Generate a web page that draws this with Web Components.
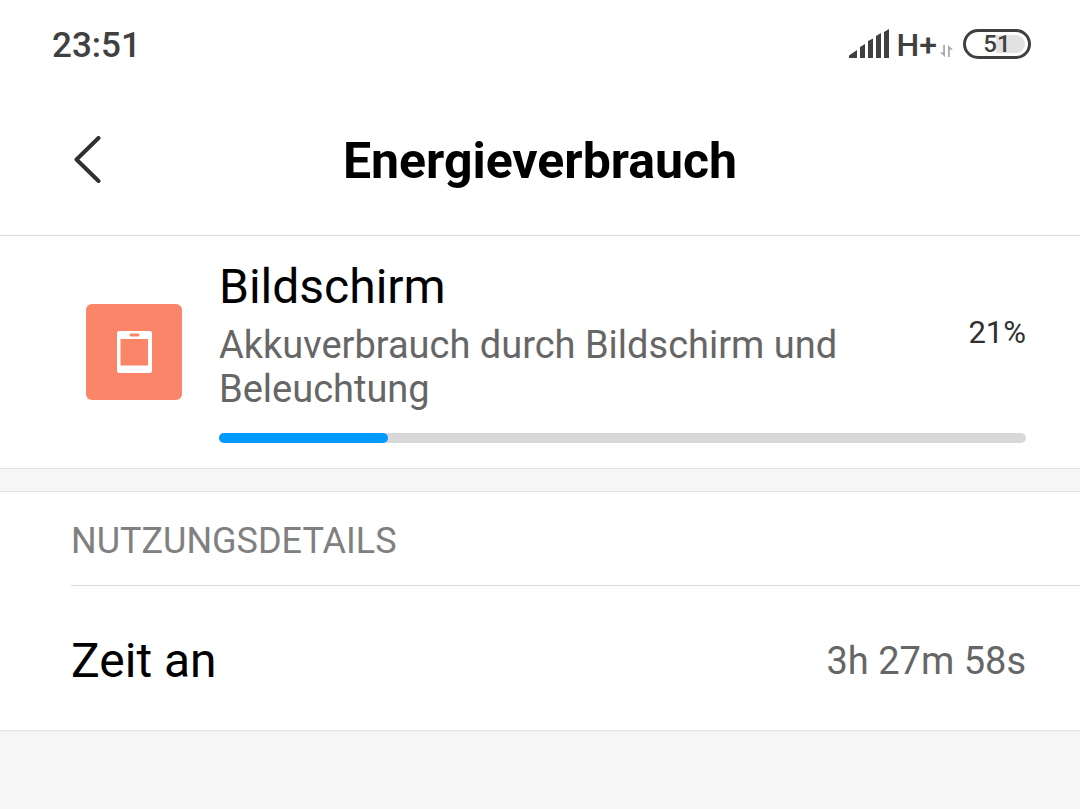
<!DOCTYPE html>
<html lang="de">
<head>
<meta charset="utf-8">
<meta name="viewport" content="width=device-width, initial-scale=1">
<title>Energieverbrauch</title>
<style>
  body {
    margin: 0;
    min-height: 100vh;
    background: #f6f6f6;
    color: #000;
    font-family: Roboto, "Noto Sans", sans-serif;
  }
</style>
</head>
<body>
<energy-page></energy-page>

<script>
const define = (name, html, setup) => {
  const template = document.createElement('template');
  template.innerHTML = html;
  customElements.define(name, class extends HTMLElement {
    constructor() {
      super();
      this.attachShadow({ mode: 'open' }).append(template.content.cloneNode(true));
    }
    connectedCallback() { if (setup) setup(this, this.shadowRoot); }
  });
};

define('signal-strength', `
  <style>:host { display: block; width: 40px; height: 30px; } svg { display: block; }</style>
  <svg width="40" height="30" viewBox="0 0 40 30" fill="#404040" role="img" aria-label="Signalstärke">
    <path d="M0 29V26.500L8 21V29ZM11 29V18L16 15V29ZM19 29V12L24 9.500V29ZM27 29V7L32 4V29ZM35 29V3L40 0V29Z"/>
  </svg>`);

define('data-arrows', `
  <style>:host { display: block; width: 13px; height: 12px; } svg { display: block; }</style>
  <svg width="13" height="12" viewBox="0 0 13 12" fill="#aaa" aria-hidden="true">
    <path d="M3.200 0H5V12L0 7.300H3.200ZM8 12V0L13 4.700H9.800V12Z"/>
  </svg>`);

define('battery-level', `
  <style>
    :host { display: block; }
    .shell {
      box-sizing: border-box; width: 68px; height: 30px; padding: 3px;
      border: 3px solid #404040; border-radius: 15px;
      color: #404040; font-size: 24px; font-weight: 500; line-height: 18px; text-align: center;
    }
    .fill { height: 18px; border-radius: 9px; background: linear-gradient(90deg, #fff 49%, #e2e2e2 49%); }
  </style>
  <div class="shell"><div class="fill"><slot></slot></div></div>`);

define('status-bar', `
  <style>
    :host {
      display: flex; justify-content: space-between; align-items: center;
      height: 88px; padding: 0 49px 0 52px; color: #404040;
    }
    time { padding-top: 4px; font-size: 35px; line-height: 40px; font-weight: 500; }
    .right { display: flex; align-items: center; }
    .net { margin-left: 8px; padding-top: 2px; font-size: 32px; line-height: 40px; font-weight: 500; }
    data-arrows { margin: 14px 10px 0 3px; }
  </style>
  <time>23:51</time>
  <div class="right">
    <signal-strength></signal-strength>
    <span class="net">H+</span>
    <data-arrows></data-arrows>
    <battery-level>51</battery-level>
  </div>`);

define('title-bar', `
  <style>
    :host {
      display: grid; grid-template-columns: 80px 1fr 80px; align-items: center;
      height: 143px; padding: 0 48px 4px; border-bottom: 1px solid #dadada;
    }
    button { width: 80px; height: 80px; padding: 0; border: 0; background: none; }
    svg { display: block; margin: 0 auto; }
    h1 { margin: 0; padding-top: 2px; font-size: 50px; line-height: 60px; font-weight: 700; text-align: center; }
  </style>
  <button type="button" aria-label="Zurück">
    <svg width="28" height="48" viewBox="0 0 28 48" fill="none" stroke="#303030" stroke-width="4" stroke-linecap="round" stroke-linejoin="round">
      <path d="M24.500 2L2.500 23.500L24.500 45"/>
    </svg>
  </button>
  <h1><slot></slot></h1>`);

define('screen-icon', `
  <style>:host { display: block; flex: none; } svg { display: block; }</style>
  <svg width="96" height="96" viewBox="0 0 96 96" aria-hidden="true">
    <rect width="96" height="96" rx="6" fill="#fa8569"/>
    <path fill="#fff" fill-rule="evenodd" d="M33 27H64Q66 27 66 29V67Q66 69 64 69H33Q31 69 31 67V29Q31 27 33 27ZM34.500 35V61.500H62V35ZM45 29.500Q43.500 29.500 43.500 31T45 32.500H52Q53.500 32.500 53.500 31T52 29.500Z"/>
  </svg>`);

define('usage-bar', `
  <style>
    :host { display: block; height: 10px; border-radius: 5px; background: #d8d8d8; }
    div { height: 10px; border-radius: 5px; background: #0099ff; }
  </style>
  <div role="progressbar" aria-label="Akkuverbrauch" aria-valuemin="0" aria-valuemax="100"></div>`,
  (host, root) => {
    const bar = root.querySelector('div');
    bar.style.width = host.getAttribute('value') + '%';
    bar.setAttribute('aria-valuenow', host.getAttribute('value'));
  });

define('usage-summary', `
  <style>
    :host { display: flex; align-items: center; gap: 37px; padding: 23px 54px 23px 86px; }
    .body { flex: 1; min-width: 0; }
    .row { display: flex; align-items: center; justify-content: space-between; gap: 80px; margin-bottom: 22px; }
    .text { flex: 1; }
    h2 { margin: 0 0 8px; font-size: 48px; line-height: 56px; font-weight: 400; }
    p { margin: 0; font-size: 38px; line-height: 44px; color: #666; }
    .percent { padding-bottom: 4px; font-size: 31px; line-height: 36px; color: #303030; }
    usage-bar { margin-bottom: 2px; }
  </style>
  <screen-icon></screen-icon>
  <div class="body">
    <div class="row">
      <div class="text">
        <h2><slot name="name"></slot></h2>
        <p><slot name="description"></slot></p>
      </div>
      <span class="percent"><slot name="percent"></slot></span>
    </div>
    <usage-bar value="21"></usage-bar>
  </div>`);

define('detail-section', `
  <style>
    :host { display: block; padding-left: 71px; }
    h2 {
      margin: 0; padding: 27px 0 22px; border-bottom: 1px solid #dadada;
      font-size: 36px; line-height: 44px; font-weight: 400; color: #808080;
    }
  </style>
  <h2><slot name="heading"></slot></h2>
  <slot></slot>`);

define('detail-row', `
  <style>
    :host { display: flex; align-items: center; justify-content: space-between; padding: 47px 54px 41px 0; }
    .label { font-size: 48px; line-height: 56px; }
    .value { font-size: 38px; line-height: 44px; color: #666; }
  </style>
  <span class="label"><slot></slot></span>
  <span class="value"><slot name="value"></slot></span>`);

define('energy-page', `
  <style>
    :host { display: block; }
    header, section { background: #fff; }
    section { border-bottom: 1px solid #e2e2e2; }
    section + section { margin-top: 22px; border-top: 1px solid #e2e2e2; }
  </style>
  <header>
    <status-bar></status-bar>
    <title-bar>Energieverbrauch</title-bar>
  </header>
  <main>
    <section>
      <usage-summary>
        <span slot="name">Bildschirm</span>
        <span slot="description">Akkuverbrauch durch Bildschirm und Beleuchtung</span>
        <span slot="percent">21%</span>
      </usage-summary>
    </section>
    <section>
      <detail-section>
        <span slot="heading">NUTZUNGSDETAILS</span>
        <detail-row>Zeit an<span slot="value">3h 27m 58s</span></detail-row>
      </detail-section>
    </section>
  </main>`);
</script>
</body>
</html>
